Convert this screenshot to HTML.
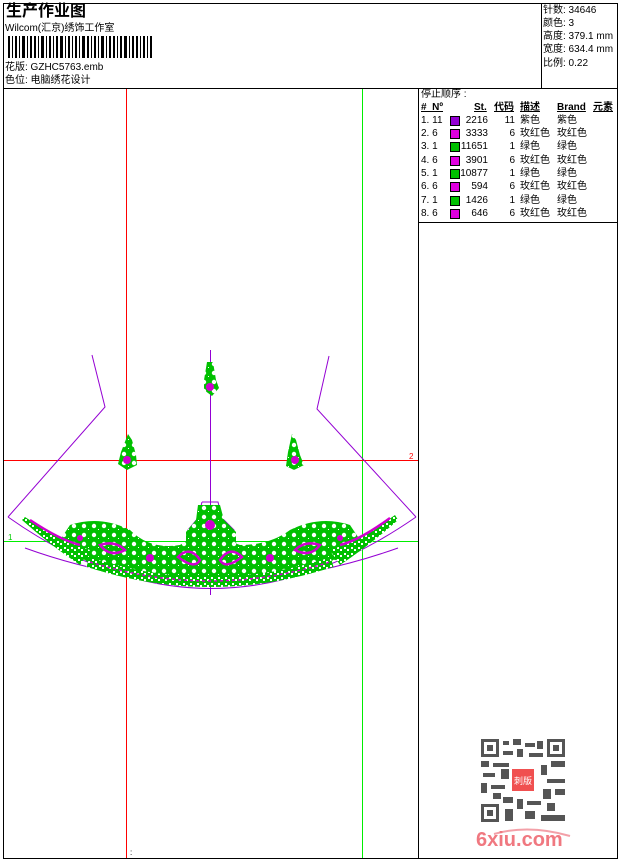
<!DOCTYPE html><html><head><meta charset="utf-8"><style>
body{margin:0;width:620px;height:860px;background:#fff;position:relative;font-family:"Liberation Sans","Noto Sans CJK SC",sans-serif;overflow:hidden}
.a{position:absolute;white-space:nowrap}
.s{font-size:10px;line-height:12px}
.r{position:absolute;font-size:10px;line-height:12px;white-space:nowrap}
.sw{position:absolute;width:8px;height:8px;border:1px solid #000}
</style></head><body>
<div class="a" style="left:3px;top:3px;width:613px;height:854px;border:1px solid #000"></div>
<div class="a" style="left:3px;top:88px;width:614px;height:1px;background:#000"></div>
<div class="a" style="left:541px;top:3px;width:1px;height:85px;background:#000"></div>
<div class="a" style="left:418px;top:88px;width:1px;height:770px;background:#000"></div>
<div class="a" style="left:418px;top:222px;width:199px;height:1px;background:#000"></div>
<div class="a" style="left:6px;top:3px;font-size:16px;font-weight:bold;line-height:18px">生产作业图</div>
<div class="a s" style="left:5px;top:23px">Wilcom(汇京)绣饰工作室</div>
<svg class="a" style="left:8px;top:36px" width="145" height="22"><g fill="#000">
<rect x="0" y="0" width="2" height="22"/><rect x="4" y="0" width="1" height="22"/><rect x="7" y="0" width="2" height="22"/><rect x="11" y="0" width="1" height="22"/><rect x="14" y="0" width="3" height="22"/><rect x="19" y="0" width="1" height="22"/><rect x="22" y="0" width="2" height="22"/><rect x="26" y="0" width="2" height="22"/><rect x="30" y="0" width="1" height="22"/><rect x="33" y="0" width="3" height="22"/><rect x="38" y="0" width="1" height="22"/><rect x="41" y="0" width="2" height="22"/><rect x="45" y="0" width="1" height="22"/><rect x="48" y="0" width="2" height="22"/><rect x="52" y="0" width="3" height="22"/><rect x="57" y="0" width="1" height="22"/><rect x="60" y="0" width="2" height="22"/><rect x="64" y="0" width="1" height="22"/><rect x="67" y="0" width="2" height="22"/><rect x="71" y="0" width="1" height="22"/><rect x="74" y="0" width="3" height="22"/><rect x="79" y="0" width="2" height="22"/><rect x="83" y="0" width="1" height="22"/><rect x="86" y="0" width="2" height="22"/><rect x="90" y="0" width="1" height="22"/><rect x="93" y="0" width="3" height="22"/><rect x="98" y="0" width="1" height="22"/><rect x="101" y="0" width="2" height="22"/><rect x="105" y="0" width="2" height="22"/><rect x="109" y="0" width="1" height="22"/><rect x="112" y="0" width="2" height="22"/><rect x="116" y="0" width="3" height="22"/><rect x="121" y="0" width="1" height="22"/><rect x="124" y="0" width="2" height="22"/><rect x="128" y="0" width="2" height="22"/><rect x="132" y="0" width="1" height="22"/><rect x="135" y="0" width="2" height="22"/><rect x="139" y="0" width="1" height="22"/><rect x="142" y="0" width="2" height="22"/></g></svg>
<div class="a s" style="left:5px;top:62px">花版: GZHC5763.emb</div>
<div class="a s" style="left:5px;top:75px">色位: 电脑绣花设计</div>
<div class="a s" style="left:543px;top:5px">针数: 34646</div>
<div class="a s" style="left:543px;top:18px">颜色: 3</div>
<div class="a s" style="left:543px;top:31px">高度: 379.1 mm</div>
<div class="a s" style="left:543px;top:44px">宽度: 634.4 mm</div>
<div class="a s" style="left:543px;top:58px">比例: 0.22</div>
<div class="a s" style="left:421px;top:89px">停止顺序 :</div>
<div class="r" style="left:421px;top:102px;font-weight:bold;text-decoration:underline">#&nbsp; Nº</div>
<div class="r" style="left:474px;top:102px;font-weight:bold;text-decoration:underline">St.</div>
<div class="r" style="left:494px;top:102px;font-weight:bold;text-decoration:underline">代码</div>
<div class="r" style="left:520px;top:102px;font-weight:bold;text-decoration:underline">描述</div>
<div class="r" style="left:557px;top:102px;font-weight:bold;text-decoration:underline">Brand</div>
<div class="r" style="left:593px;top:102px;font-weight:bold;text-decoration:underline">元素</div>
<div style="position:absolute;left:0;top:115px">
<div class="r" style="left:421px;top:0">1. 11</div><div class="sw" style="left:450px;top:1px;background:#9400d3"></div><div class="r" style="left:458px;top:0;width:30px;text-align:right">2216</div><div class="r" style="left:500px;top:0;width:15px;text-align:right">11</div><div class="r" style="left:520px;top:0">紫色</div><div class="r" style="left:557px;top:0">紫色</div>
<div class="r" style="left:421px;top:13px">2. 6</div><div class="sw" style="left:450px;top:14px;background:#e000e0"></div><div class="r" style="left:458px;top:13px;width:30px;text-align:right">3333</div><div class="r" style="left:500px;top:13px;width:15px;text-align:right">6</div><div class="r" style="left:520px;top:13px">玫红色</div><div class="r" style="left:557px;top:13px">玫红色</div>
<div class="r" style="left:421px;top:26px">3. 1</div><div class="sw" style="left:450px;top:27px;background:#00c000"></div><div class="r" style="left:458px;top:26px;width:30px;text-align:right">11651</div><div class="r" style="left:500px;top:26px;width:15px;text-align:right">1</div><div class="r" style="left:520px;top:26px">绿色</div><div class="r" style="left:557px;top:26px">绿色</div>
<div class="r" style="left:421px;top:40px">4. 6</div><div class="sw" style="left:450px;top:41px;background:#e000e0"></div><div class="r" style="left:458px;top:40px;width:30px;text-align:right">3901</div><div class="r" style="left:500px;top:40px;width:15px;text-align:right">6</div><div class="r" style="left:520px;top:40px">玫红色</div><div class="r" style="left:557px;top:40px">玫红色</div>
<div class="r" style="left:421px;top:53px">5. 1</div><div class="sw" style="left:450px;top:54px;background:#00c000"></div><div class="r" style="left:458px;top:53px;width:30px;text-align:right">10877</div><div class="r" style="left:500px;top:53px;width:15px;text-align:right">1</div><div class="r" style="left:520px;top:53px">绿色</div><div class="r" style="left:557px;top:53px">绿色</div>
<div class="r" style="left:421px;top:66px">6. 6</div><div class="sw" style="left:450px;top:67px;background:#e000e0"></div><div class="r" style="left:458px;top:66px;width:30px;text-align:right">594</div><div class="r" style="left:500px;top:66px;width:15px;text-align:right">6</div><div class="r" style="left:520px;top:66px">玫红色</div><div class="r" style="left:557px;top:66px">玫红色</div>
<div class="r" style="left:421px;top:80px">7. 1</div><div class="sw" style="left:450px;top:81px;background:#00c000"></div><div class="r" style="left:458px;top:80px;width:30px;text-align:right">1426</div><div class="r" style="left:500px;top:80px;width:15px;text-align:right">1</div><div class="r" style="left:520px;top:80px">绿色</div><div class="r" style="left:557px;top:80px">绿色</div>
<div class="r" style="left:421px;top:93px">8. 6</div><div class="sw" style="left:450px;top:94px;background:#e000e0"></div><div class="r" style="left:458px;top:93px;width:30px;text-align:right">646</div><div class="r" style="left:500px;top:93px;width:15px;text-align:right">6</div><div class="r" style="left:520px;top:93px">玫红色</div><div class="r" style="left:557px;top:93px">玫红色</div>
</div>
<svg class="a" style="left:0;top:0" width="418" height="860">
<defs><pattern id="lace" width="7" height="6" patternUnits="userSpaceOnUse"><rect width="7" height="6" fill="#00c000"/><rect x="1" y="1" width="2" height="2" fill="#fff"/><rect x="4" y="3" width="2" height="2" fill="#fff"/></pattern>
<pattern id="lace2" width="10" height="9" patternUnits="userSpaceOnUse"><rect width="10" height="9" fill="#00c000"/><circle cx="4" cy="4" r="2.2" fill="#fff"/><rect x="8" y="7" width="1" height="1" fill="#fff"/></pattern></defs>
<line x1="126.5" y1="89" x2="126.5" y2="858" stroke="#f00"/>
<line x1="362.5" y1="89" x2="362.5" y2="858" stroke="#0e0"/>
<line x1="4" y1="460.5" x2="418" y2="460.5" stroke="#f00"/>
<line x1="4" y1="541.5" x2="418" y2="541.5" stroke="#0e0"/>
<text x="409" y="459" font-size="8" fill="#f00">2</text><text x="8" y="540" font-size="8" fill="#0c0">1</text>
<g fill="none" stroke="#9400d3" stroke-width="1">
<line x1="210.5" y1="350" x2="210.5" y2="595"/>
<polyline points="92,355 105,407 8,517"/>
<polyline points="329,356 317,409 416,517"/>
<path d="M8,517 Q210,660 416,517"/>
<path d="M25,548 Q210,615 398,548"/>
<path d="M202,502 L218,502 L222,518 L234,530 L236,545"/>
<path d="M202,502 L198,518 L188,530 L187,545"/>
</g>
<g fill="url(#lace2)">
<path d="M207,362 L213,362 L216,380 L219,388 L212,396 L204,390 L204,380Z"/>
<path d="M128,434 L132,440 L136,455 L137,465 L127,470 L118,464 L121,452Z"/>
<path d="M292,434 L296,440 L300,455 L304,465 L294,470 L286,466 L288,452Z"/>
<path d="M198,505 L220,505 L224,520 L236,532 L236,550 L186,550 L186,532 L196,520Z"/>
<path d="M70,525 Q100,515 130,530 Q150,550 180,545 Q200,530 240,545 Q270,545 290,530 Q320,515 350,525 L360,540 Q330,572 280,580 Q210,592 140,580 Q90,572 60,540Z"/>
</g>
<path d="M25,517 Q60,540 90,550 L80,565 Q50,545 22,520Z" fill="url(#lace)"/>
<path d="M395,515 Q360,540 330,550 L340,565 Q370,545 398,520Z" fill="url(#lace)"/>
<path d="M88,562 Q210,602 332,562" fill="none" stroke="url(#lace)" stroke-width="10"/>
<path d="M90,562 Q210,600 330,562" fill="none" stroke="#d000d0" stroke-width="1.5" stroke-dasharray="3 3"/>
<g fill="none" stroke="#d000d0" stroke-width="2.5">
<path d="M178,557 Q190,545 200,560 Q195,570 178,557Z"/>
<path d="M242,557 Q230,545 220,560 Q225,570 242,557Z"/>
<path d="M100,545 Q115,540 125,550 Q110,558 100,545Z"/>
<path d="M320,545 Q305,540 295,550 Q310,558 320,545Z"/>
<path d="M30,520 Q60,540 80,545"/><path d="M390,518 Q360,540 340,545"/>
</g>
<g fill="#d000d0"><circle cx="210" cy="387" r="4"/><circle cx="127" cy="460" r="4"/><circle cx="295" cy="460" r="4"/><circle cx="210" cy="525" r="5"/><circle cx="150" cy="558" r="4"/><circle cx="270" cy="558" r="4"/><circle cx="80" cy="538" r="3"/><circle cx="340" cy="538" r="3"/></g>
<text x="130" y="855" font-size="8">:</text>
</svg>
<svg class="a" style="left:481px;top:739px" width="84" height="83">
<rect width="84" height="83" fill="#fff"/>
<g fill="#555">
<rect x="0" y="0" width="18" height="18"/><rect x="66" y="0" width="18" height="18"/><rect x="0" y="65" width="18" height="18"/>
<rect x="22" y="2" width="6" height="4"/><rect x="32" y="0" width="8" height="6"/><rect x="44" y="4" width="10" height="4"/><rect x="56" y="2" width="6" height="8"/>
<rect x="22" y="12" width="10" height="4"/><rect x="36" y="10" width="6" height="8"/><rect x="48" y="14" width="14" height="4"/>
<rect x="0" y="22" width="8" height="6"/><rect x="12" y="24" width="16" height="4"/><rect x="70" y="22" width="14" height="6"/><rect x="60" y="26" width="6" height="10"/>
<rect x="2" y="34" width="12" height="4"/><rect x="66" y="40" width="18" height="4"/><rect x="0" y="44" width="6" height="10"/><rect x="10" y="46" width="14" height="4"/>
<rect x="62" y="50" width="8" height="10"/><rect x="74" y="50" width="10" height="6"/><rect x="22" y="58" width="10" height="6"/><rect x="36" y="60" width="6" height="10"/>
<rect x="46" y="62" width="14" height="4"/><rect x="66" y="64" width="8" height="8"/><rect x="24" y="70" width="8" height="12"/><rect x="44" y="72" width="10" height="8"/><rect x="60" y="76" width="24" height="6"/>
<rect x="12" y="54" width="8" height="6"/><rect x="20" y="30" width="8" height="10"/>
</g>
<g fill="#fff"><rect x="3" y="3" width="12" height="12"/><rect x="69" y="3" width="12" height="12"/><rect x="3" y="68" width="12" height="12"/></g>
<g fill="#555"><rect x="6" y="6" width="6" height="6"/><rect x="72" y="6" width="6" height="6"/><rect x="6" y="71" width="6" height="6"/></g>
<rect x="31" y="30" width="22" height="22" fill="#f05050"/>
<text x="42" y="45" font-size="9" fill="#fff" text-anchor="middle" font-family="Noto Sans CJK SC">刺版</text>
</svg>
<svg class="a" style="left:474px;top:826px" width="100" height="26"><path d="M20,8 Q55,-2 96,10" fill="none" stroke="#f3a0a8" stroke-width="2"/></svg>
<div class="a" style="left:476px;top:829px;font-size:20px;font-weight:bold;color:#f07880;line-height:22px">6xiu.com</div>
</body></html>
